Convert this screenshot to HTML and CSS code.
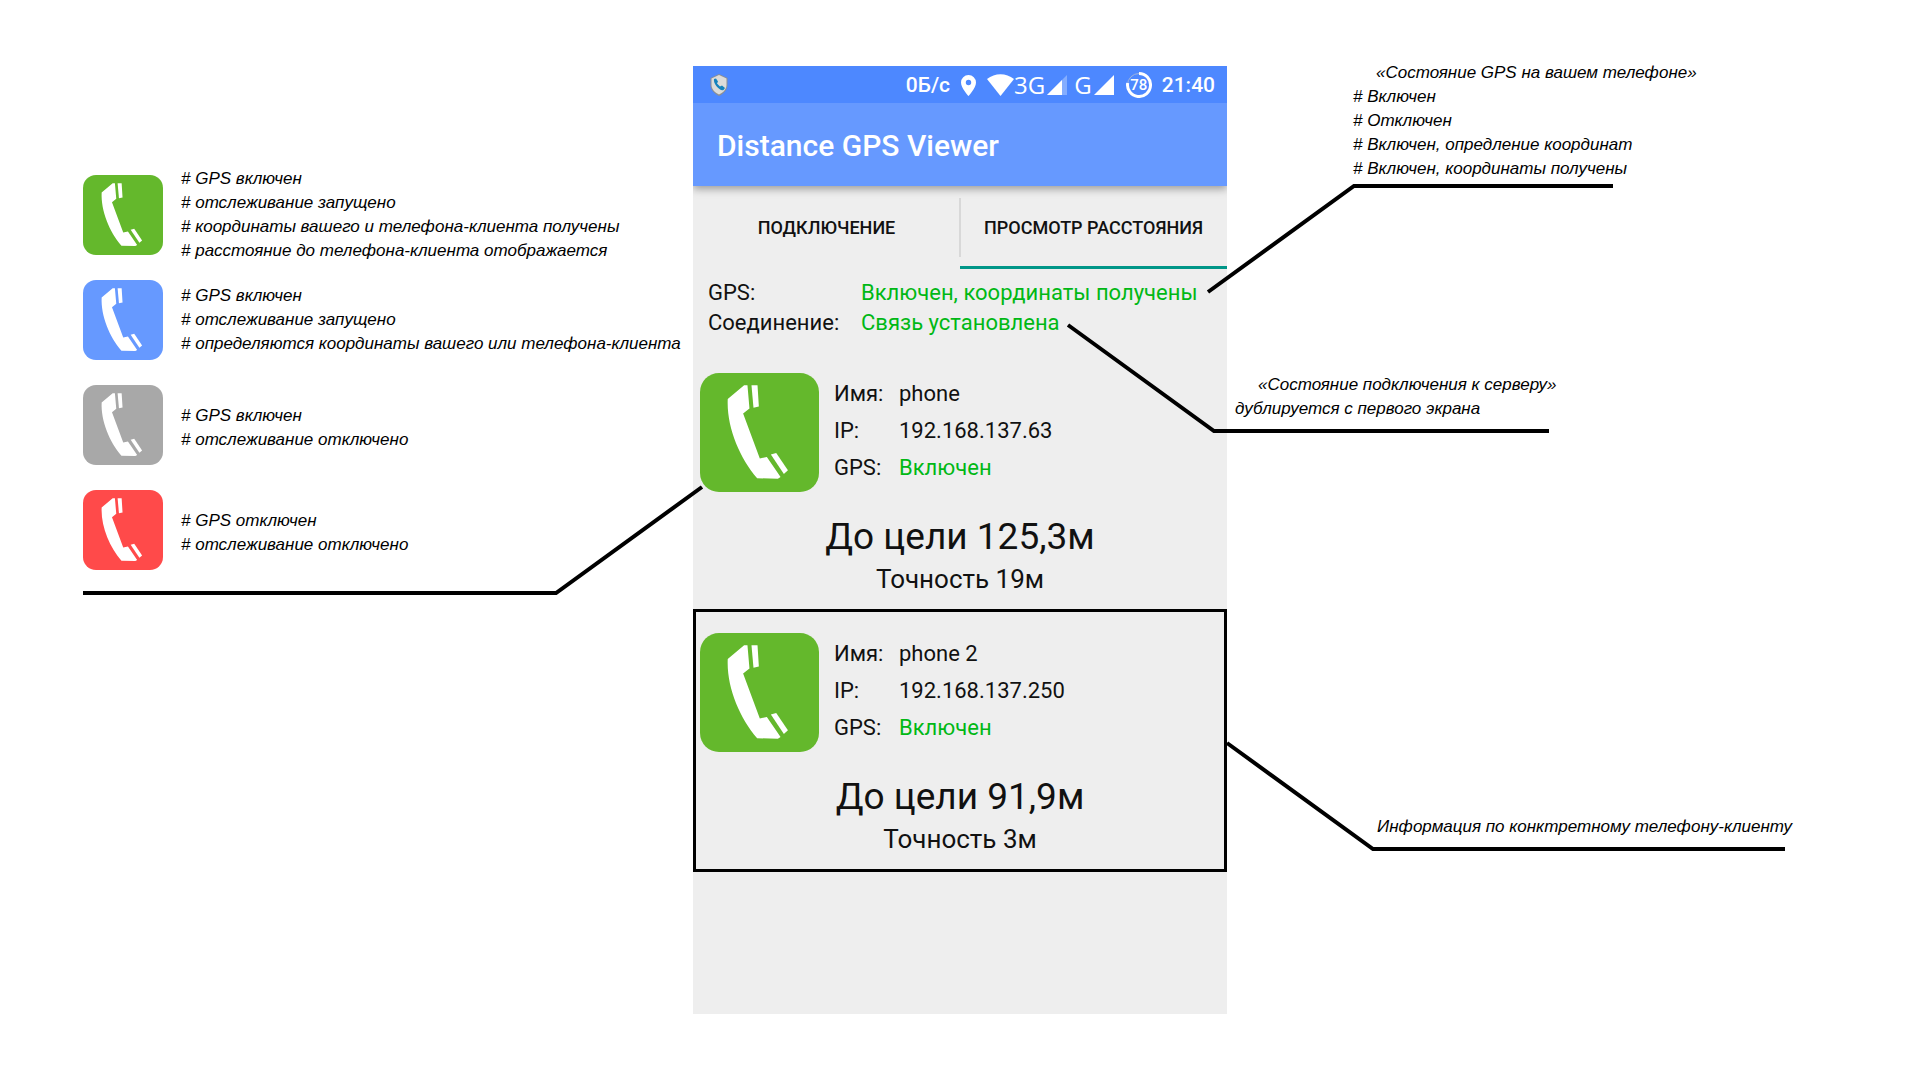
FILE: index.html
```html
<!DOCTYPE html>
<html lang="ru">
<head>
<meta charset="utf-8">
<meta name="viewport" content="width=device-width, initial-scale=1">
<title>Distance GPS Viewer</title>
<link rel="stylesheet" href="styles.css">
</head>
<body>
<svg class="sprite" aria-hidden="true">
  <symbol id="handset" viewBox="17 25 356 356">
    <path d="M149 62H159L165 131L146 146L196 281L217 276L258 336L250 341L188 340C135 278 96 185 100 103Z"/>
    <path d="M171 62H189L193 125L177 129Z"/>
    <path d="M229 269L245 264L280 316L268 327Z"/>
  </symbol>
</svg>
<main class="board">
  <section class="legend">
    <ul class="legend-list">
      <li class="legend-item">
        <svg class="badge badge-green" aria-hidden="true"><use href="#handset"/></svg>
        <p class="note"># GPS включен<br># отслеживание запущено<br># координаты вашего и телефона-клиента получены<br># расстояние до телефона-клиента отображается</p>
      </li>
      <li class="legend-item">
        <svg class="badge badge-blue" aria-hidden="true"><use href="#handset"/></svg>
        <p class="note"># GPS включен<br># отслеживание запущено<br># определяются координаты вашего или телефона-клиента</p>
      </li>
      <li class="legend-item">
        <svg class="badge badge-gray" aria-hidden="true"><use href="#handset"/></svg>
        <p class="note note-short"># GPS включен<br># отслеживание отключено</p>
      </li>
      <li class="legend-item">
        <svg class="badge badge-red" aria-hidden="true"><use href="#handset"/></svg>
        <p class="note note-short"># GPS отключен<br># отслеживание отключено</p>
      </li>
    </ul>
    <svg class="leader leader-legend" width="620" height="112" viewBox="0 0 620 112" aria-hidden="true"><path d="M0 108H473L619 2"/></svg>
  </section>

  <section class="phone">
    <div class="status-bar">
      <svg class="status-shield" width="18" height="22" viewBox="0 0 18 22" aria-hidden="true">
        <path d="M9 0L17.500 4V11C17.500 16 13 20 9 22C5 20 .5 16 .5 11V4Z" fill="#8d8f92"/>
        <path d="M9 1L16.500 4.500V11C16.500 15.500 12.500 19 9 20.500C5.500 19 1.500 15.500 1.500 11V4.500Z" fill="#dcdcda"/>
        <path d="M4 5L6 4.500L8 7.500L7 9.500L10 12.500L12 11.500L15 14L13.500 16C10 17.500 3 10 4 5Z" fill="#1583bd"/>
      </svg>
      <span class="status-rate">0Б/с</span>
      <svg class="status-pin" width="15" height="21" viewBox="0 0 15 21" aria-hidden="true"><path fill="#fff" fill-rule="evenodd" d="M7.500 0A7.500 7.500 0 0 1 15 7.500C15 13 7.500 21 7.500 21S0 13 0 7.500A7.500 7.500 0 0 1 7.500 0ZM7.500 4.800A2.700 2.700 0 1 0 7.500 10.200A2.700 2.700 0 1 0 7.500 4.800Z"/></svg>
      <svg width="27" height="22" viewBox="0 0 27 22" aria-hidden="true"><path fill="#fff" d="M0 5C8-1.500 19-1.500 27 5L13.500 22Z"/></svg>
      <span class="status-net">3G</span>
      <svg class="status-signal" width="20" height="20" viewBox="0 0 20 20" aria-hidden="true"><path fill="#84adff" d="M20 0V20H0Z"/><path fill="#fff" d="M15 5V20H0Z"/></svg>
      <span class="status-net">G</span>
      <svg class="status-signal" width="20" height="20" viewBox="0 0 20 20" aria-hidden="true"><path fill="#fff" d="M20 0V20H0Z"/></svg>
      <span class="battery">
        <svg class="battery-ring" width="26" height="26" viewBox="0 0 26 26" aria-hidden="true"><circle cx="13" cy="13" r="11.500" fill="none" stroke="#9fb4dc" stroke-width="1"/><path d="M13 1.500A11.500 11.500 0 1 1 1.700 11" fill="none" stroke="#fff" stroke-width="3"/></svg>
        <span>78</span>
      </span>
      <time class="status-time">21:40</time>
    </div>
    <h1 class="app-bar">Distance GPS Viewer</h1>
    <nav class="tabs">
      <button class="tab" type="button">ПОДКЛЮЧЕНИЕ</button>
      <button class="tab tab-active" type="button">ПРОСМОТР РАССТОЯНИЯ</button>
    </nav>
    <dl class="summary">
      <dt>GPS:</dt><dd class="ok">Включен, координаты получены</dd>
      <dt>Соединение:</dt><dd class="ok">Связь установлена</dd>
    </dl>
    <article class="client">
      <div class="client-head">
        <svg class="badge badge-large badge-green" aria-hidden="true"><use href="#handset"/></svg>
        <dl class="details">
          <dt>Имя:</dt><dd>phone</dd>
          <dt>IP:</dt><dd>192.168.137.63</dd>
          <dt>GPS:</dt><dd class="ok">Включен</dd>
        </dl>
      </div>
      <p class="distance">До цели 125,3м</p>
      <p class="accuracy">Точность 19м</p>
    </article>
    <article class="client client-marked">
      <div class="client-head">
        <svg class="badge badge-large badge-green" aria-hidden="true"><use href="#handset"/></svg>
        <dl class="details">
          <dt>Имя:</dt><dd>phone 2</dd>
          <dt>IP:</dt><dd>192.168.137.250</dd>
          <dt>GPS:</dt><dd class="ok">Включен</dd>
        </dl>
      </div>
      <p class="distance">До цели 91,9м</p>
      <p class="accuracy">Точность 3м</p>
    </article>
  </section>

  <section class="callouts">
    <div class="callout callout-gps">
      <p class="note"><span class="note-title">«Состояние GPS на вашем телефоне»</span><br># Включен<br># Отключен<br># Включен, опредление координат<br># Включен, координаты получены</p>
      <svg class="leader leader-gps" width="406" height="110" viewBox="0 0 406 110" aria-hidden="true"><path d="M0 108L146 2H405"/></svg>
    </div>
    <div class="callout callout-server">
      <p class="note"><span class="note-title">«Состояние подключения к серверу»</span><br>дублируется с первого экрана</p>
      <svg class="leader leader-server" width="481" height="110" viewBox="0 0 481 110" aria-hidden="true"><path d="M0 2L146 108H481"/></svg>
    </div>
    <div class="callout callout-client">
      <p class="note">Информация по конктретному телефону-клиенту</p>
      <svg class="leader leader-client" width="558" height="110" viewBox="0 0 558 110" aria-hidden="true"><path d="M0 2L146 108H558"/></svg>
    </div>
  </section>
</main>
</body>
</html>
```
FILE: styles.css
```css
* {
  box-sizing: border-box;
}

body {
  margin: 0;
  background: #fff;
  color: #000;
  font-family: Roboto, "Liberation Sans", sans-serif;
}

p, h1, ul, dl, dd {
  margin: 0;
  padding: 0;
}

.sprite {
  display: none;
}

.board {
  display: grid;
  grid-template-columns: minmax(610px, 1fr) minmax(auto, 534px) minmax(560px, 1fr);
  padding: 61px 0 66px;
}

/* Annotations */
.note {
  font: italic 17px/24px "Liberation Sans", sans-serif;
  white-space: nowrap;
}

.note-title {
  padding-left: 23px;
}

.note-short {
  padding-top: 5px;
}

.leader {
  position: absolute;
  overflow: visible;
  pointer-events: none;
}

.leader path {
  fill: none;
  stroke: #000;
  stroke-width: 4;
}

.legend {
  position: relative;
  justify-self: end;
  width: 610px;
  padding-top: 106px;
}

.legend-list {
  display: grid;
  row-gap: 9px;
  list-style: none;
}

.legend-item {
  display: flex;
  align-items: center;
  gap: 18px;
  min-height: 96px;
}

.leader-legend {
  left: 0;
  top: 424px;
}

.badge {
  flex: none;
  width: 80px;
  height: 80px;
  border-radius: 13px;
  fill: #fff;
}

.badge-large {
  width: 119px;
  height: 119px;
  border-radius: 19px;
}

.badge-green { background: #64b82c; }
.badge-blue { background: #6699ff; }
.badge-gray { background: #a8a8a8; }
.badge-red { background: #ff4a4a; }

/* Phone screen */
.phone {
  margin-top: 5px;
  min-height: 948px;
  background: #eee;
  color: #111;
}

.status-bar {
  display: flex;
  align-items: center;
  height: 37px;
  padding: 1px 12px 0 17px;
  background: #4d88ff;
  color: #fff;
  font-size: 21px;
  font-weight: 500;
  line-height: 36px;
}

.status-rate {
  margin-left: auto;
}

.status-pin {
  margin: 0 11px;
}

.status-net {
  font: 24px/36px "Open Sans", "Noto Sans", sans-serif;
}

.status-signal {
  margin: 0 7px 0 2px;
}

.battery {
  position: relative;
  display: grid;
  place-items: center;
  width: 26px;
  height: 26px;
  margin: 0 10px 0 5px;
  font-size: 15px;
  line-height: 26px;
}

.battery-ring {
  position: absolute;
  inset: 0;
}

.app-bar {
  position: relative;
  padding: 2px 24px 0;
  background: #6699ff;
  box-shadow: 0 3px 8px rgba(0, 0, 0, .35);
  clip-path: inset(0 0 -16px 0);
  color: #fff;
  font-size: 30px;
  font-weight: 500;
  line-height: 81px;
}

.tabs {
  display: grid;
  grid-template-columns: 1fr 1fr;
  background: linear-gradient(#d8d8d8, #d8d8d8) center 12px / 2px 59px no-repeat;
}

.tab {
  height: 83px;
  padding: 4px 0 0;
  border: 0;
  border-bottom: 3px solid transparent;
  background: none;
  color: #111;
  font: 500 18px/24px Roboto, "Liberation Sans", sans-serif;
}

.tab-active {
  border-bottom-color: #009688;
}

.summary {
  display: grid;
  grid-template-columns: 153px 1fr;
  padding: 9px 15px 11px;
  font-size: 22px;
  line-height: 30px;
}

.ok {
  color: #00b815;
}

.client {
  padding: 21px 0 12px;
  border: 3px solid transparent;
  text-align: center;
}

.client + .client {
  margin-top: -3px;
}

.client-marked {
  border-color: #000;
}

.client-head {
  display: flex;
  gap: 15px;
  padding-left: 4px;
  text-align: left;
}

.details {
  display: grid;
  grid-template-columns: 65px 1fr;
  align-content: start;
  padding-top: 2px;
  font-size: 22px;
  line-height: 37px;
}

.distance {
  margin-top: 21px;
  font-size: 37px;
  line-height: 48px;
}

.accuracy {
  font-size: 26px;
  line-height: 36px;
}

/* Right-hand callouts */
.callouts {
  display: flex;
  flex-direction: column;
  align-items: flex-start;
}

.callout {
  position: relative;
}

.callout-gps {
  margin-left: 126px;
}

.callout-server {
  margin: 192px 0 0 8px;
}

.callout-client {
  margin: 394px 0 0 150px;
}

.leader-gps {
  left: -145px;
  top: 123px;
}

.leader-server {
  left: -167px;
  top: -50px;
}

.leader-client {
  left: -150px;
  top: -74px;
}
```
